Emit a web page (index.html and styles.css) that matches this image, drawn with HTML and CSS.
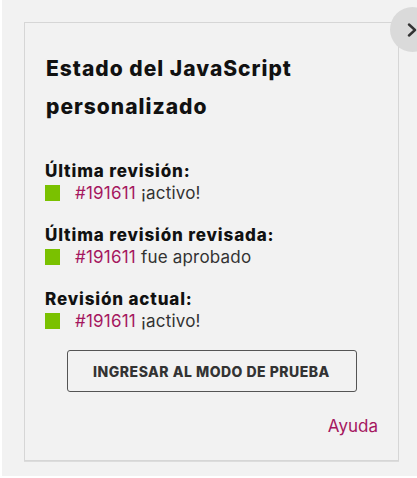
FILE: index.html
```html
<!DOCTYPE html>
<html lang="es">
<head>
<meta charset="utf-8">
<title>Estado del JavaScript personalizado</title>
<link rel="stylesheet" href="styles.css">
</head>
<body>
<div class="page">
  <section class="card">
    <h2 class="title">Estado del JavaScript personalizado</h2>
    <div class="group">
      <div class="label">Última revisión:</div>
      <div class="value"><span class="dot"></span><a class="rev" href="#">#191611</a>&nbsp;¡activo!</div>
    </div>
    <div class="group">
      <div class="label">Última revisión revisada:</div>
      <div class="value"><span class="dot"></span><a class="rev" href="#">#191611</a>&nbsp;fue aprobado</div>
    </div>
    <div class="group">
      <div class="label">Revisión actual:</div>
      <div class="value"><span class="dot"></span><a class="rev" href="#">#191611</a>&nbsp;¡activo!</div>
    </div>
    <div class="actions">
      <button class="btn" type="button">INGRESAR AL MODO DE PRUEBA</button>
    </div>
    <div class="help"><a href="#">Ayuda</a></div>
  </section>
  <button class="close" type="button" aria-label="Cerrar">
    <svg width="10" height="14" viewBox="0 0 10 14"><path d="M2 1.5 L8 7 L2 12.5" fill="none" stroke="#333" stroke-width="2.4" stroke-linecap="round" stroke-linejoin="round"/></svg>
  </button>
</div>
</body>
</html>
```

FILE: styles.css
```css
html, body {
  margin: 0;
  padding: 0;
  background: #ffffff;
}
body {
  font-family: Inter, "Noto Sans", sans-serif;
  color: #333;
}
.page {
  position: relative;
  margin-left: 2px;
  height: 476px;
  background: #f2f2f2;
  padding: 22px 0 0 22px;
  box-sizing: border-box;
  overflow: hidden;
}
.card {
  width: 375px;
  height: 439px;
  box-sizing: border-box;
  border: 1px solid #d6d6d6;
  box-shadow: 0 1px 0 #dcdcdc;
  padding: 27px 20px 0 20px;
}
.title {
  margin: 0 0 35px 1px;
  font-size: 21px;
  line-height: 38px;
  font-weight: 800;
  letter-spacing: 1px;
  color: #111;
  width: 280px;
}
.group {
  margin-bottom: 21px;
}
.label {
  font-size: 17px;
  font-weight: 800;
  letter-spacing: 0.85px;
  color: #111;
  line-height: 21px;
}
.value {
  display: flex;
  align-items: center;
  font-size: 17px;
  letter-spacing: 0.2px;
  line-height: 22px;
  color: #333;
}
.dot {
  width: 15px;
  height: 16px;
  background: #7ac100;
  margin-right: 15px;
}
.rev {
  color: #a5175f;
  text-decoration: none;
}
.actions {
  display: flex;
  justify-content: center;
  margin-top: -3px;
}
.btn {
  width: 290px;
  height: 42px;
  border: 1px solid #555;
  border-radius: 3px;
  background: transparent;
  font-family: Inter, "Noto Sans", sans-serif;
  font-size: 14px;
  font-weight: 800;
  color: #333;
  letter-spacing: 0.5px;
}
.help {
  text-align: right;
  margin-top: 23px;
  font-size: 17px;
  line-height: 22px;
}
.help a {
  color: #a5175f;
  text-decoration: none;
}
.close {
  position: absolute;
  top: 7px;
  left: 388px;
  width: 45px;
  height: 45px;
  border-radius: 50%;
  border: none;
  background: #dadada;
  padding: 0 0 0 17px;
  display: flex;
  align-items: center;
}
```
